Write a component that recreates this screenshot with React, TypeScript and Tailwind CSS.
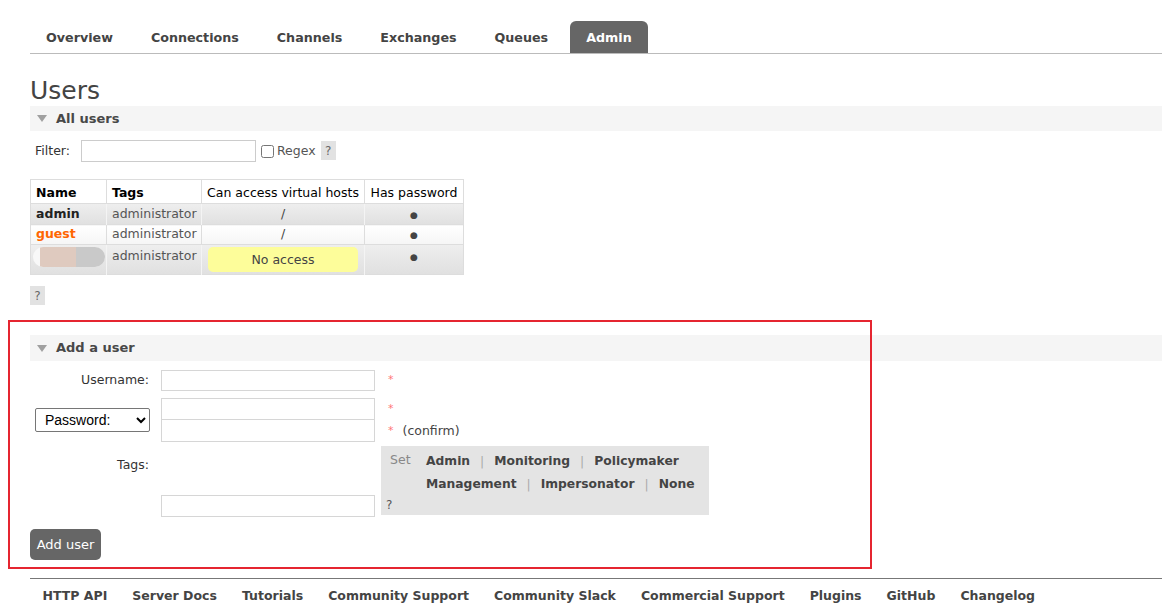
import React from "react";

const tabs = ["Overview", "Connections", "Channels", "Exchanges", "Queues", "Admin"];
const footerLinks = [
  "HTTP API",
  "Server Docs",
  "Tutorials",
  "Community Support",
  "Community Slack",
  "Commercial Support",
  "Plugins",
  "GitHub",
  "Changelog",
];

function SectionBar({ title }: { title: string }) {
  return (
    <div className="flex h-full items-center bg-[#f5f5f5] pl-[7px]">
      <svg width="10" height="7" viewBox="0 0 10 7">
        <polygon points="0,0 10,0 5,7" fill="#a0a0a0" />
      </svg>
      <span className="ml-[9px] text-[13px] font-bold text-[#484848]">{title}</span>
    </div>
  );
}

function Help() {
  return (
    <span className="inline-flex h-[19px] w-[15px] items-center justify-center bg-[#e2e2e2] text-[12px] text-[#666]">
      ?
    </span>
  );
}

function Dot() {
  return <span className="text-[9px] text-[#444]">●</span>;
}

function TagSep() {
  return <span className="mx-[10px] font-normal text-[#aaa]">|</span>;
}

export default function App() {
  return (
    <div className="relative min-h-[605px] bg-white font-['DejaVu_Sans',Verdana,sans-serif] text-[12.5px] text-[#484848]">
      {/* tabs */}
      <div className="ml-[30px] flex h-[54px] items-end border-b border-[#bbb] pt-[21px]">
        {tabs.map((t) =>
          t === "Admin" ? (
            <div key={t} className="mr-[6px] flex h-[32px] items-center rounded-t-[6px] bg-[#666] px-4 pt-[2px] text-[12.7px] font-bold text-white">
              {t}
            </div>
          ) : (
            <div key={t} className="mr-[6px] flex h-[32px] items-center px-4 pt-[2px] text-[12.7px] font-bold text-[#444]">
              {t}
            </div>
          )
        )}
      </div>

      <div className="pl-[30px]">
        <h1 className="mt-[22px] text-[25px] leading-[30px] font-normal text-[#444]">Users</h1>

        <div className="h-[25px]">
          <SectionBar title="All users" />
        </div>

        {/* filter */}
        <div className="mt-[9px] flex h-[22px] items-center pl-[5px]">
          <span className="text-[#333]">Filter:</span>
          <input className="ml-[11px] h-[22px] w-[175px] border border-[#ccc] bg-white" />
          <input type="checkbox" className="ml-[5px] h-[13px] w-[13px]" />
          <span className="ml-[3px] text-[#555]">Regex</span>
          <span className="ml-[5px]">
            <Help />
          </span>
        </div>

        {/* users table */}
        <table className="mt-[17px] w-[434px] table-fixed border-collapse border border-[#ddd] text-[12.5px]">
          <thead>
            <tr className="h-[24px] bg-white text-black">
              <th className="w-[76px] border border-[#ddd] px-[5px] pt-[3px] text-left font-bold">Name</th>
              <th className="w-[95px] border border-[#ddd] px-[5px] pt-[3px] text-left font-bold">Tags</th>
              <th className="w-[163px] border border-[#ddd] px-[2px] pt-[3px] text-center font-normal whitespace-nowrap">Can access virtual hosts</th>
              <th className="w-[99px] border border-[#ddd] px-[2px] pt-[3px] text-center font-normal whitespace-nowrap">Has password</th>
            </tr>
          </thead>
          <tbody>
            <tr className="h-[21px] bg-linear-to-b from-[#eeeeee] to-[#e0e0e0]">
              <td className="border-r border-[#f4f4f4] px-[5px] pt-[1px] font-bold text-[#222]">admin</td>
              <td className="border-r border-[#f4f4f4] px-[5px] pt-[1px] text-[#555]">administrator</td>
              <td className="border-r border-[#f4f4f4] px-[5px] pt-[1px] text-center text-[#444]">/</td>
              <td className="px-[5px] pt-[1px] text-center">
                <Dot />
              </td>
            </tr>
            <tr className="h-[20px] border-y border-[#ddd] bg-linear-to-b from-white to-[#f6f6f6]">
              <td className="border-r border-[#ddd] px-[5px] font-bold text-[#ff6600]">guest</td>
              <td className="border-r border-[#ddd] px-[5px] text-[#555]">administrator</td>
              <td className="border-r border-[#ddd] px-[5px] text-center text-[#444]">/</td>
              <td className="px-[5px] text-center">
                <Dot />
              </td>
            </tr>
            <tr className="h-[30px] bg-linear-to-b from-[#eeeeee] to-[#e0e0e0]">
              <td className="border-r border-[#f4f4f4] px-[2px] pt-[2px] align-top">
                <div className="flex h-[20px] w-[72px] overflow-hidden rounded-full bg-[#f8f8f8]">
                  <div className="w-[7px]" />
                  <div className="w-[36px] bg-[#dfcabf]" />
                  <div className="flex-1 bg-[#c9c9c9]" />
                </div>
              </td>
              <td className="border-r border-[#f4f4f4] px-[5px] pt-[2px] align-top text-[#555]">administrator</td>
              <td className="border-r border-[#f4f4f4] px-[6px] pt-[2px] align-top">
                <div className="flex h-[25px] items-center justify-center rounded-[5px] bg-[#fdfd9a] pt-[1px] text-[#444]">No access</div>
              </td>
              <td className="px-[5px] pt-[2px] align-top text-center">
                <Dot />
              </td>
            </tr>
          </tbody>
        </table>

        <div className="mt-[11px] flex">
          <Help />
        </div>

        <div className="mt-[30px] h-[26px]">
          <SectionBar title="Add a user" />
        </div>

        {/* add user form */}
        <div className="mt-[9px]">
          <div className="flex h-[21px] items-center">
            <label className="w-[119px] text-right text-[#333]">Username:</label>
            <input className="ml-[12px] h-[21px] w-[214px] border border-[#d6d6d6] bg-white" />
            <span className="ml-[13px] text-[11px] text-[#f77]">*</span>
          </div>

          <div className="mt-[7px] flex items-center">
            <div className="w-[131px] pl-[5px]">
              <select className="h-[24px] w-[115px] rounded-[2px] border border-[#767676] bg-white pl-[5px] font-['Liberation_Sans',Arial,sans-serif] text-[14px] text-black">
                <option>Password:</option>
              </select>
            </div>
            <div className="flex w-[214px] flex-col">
              <input type="password" className="h-[22px] border border-[#d6d6d6] bg-white" />
              <input type="password" className="h-[22px] border border-t-0 border-[#d6d6d6] bg-white" />
            </div>
            <div className="ml-[13px] flex flex-col">
              <div className="flex h-[22px] items-center text-[11px] text-[#f77]">*</div>
              <div className="flex h-[22px] items-center">
                <span className="text-[11px] text-[#f77]">*</span>
                <span className="ml-[9px] text-[#444]">(confirm)</span>
              </div>
            </div>
          </div>

          <div className="mt-[4px] flex items-start">
            <label className="w-[119px] pt-[10px] text-right text-[#333]">Tags:</label>
            <input className="mt-[49px] ml-[12px] h-[22px] w-[214px] border border-[#d6d6d6] bg-white" />
            <div className="ml-[6px] flex h-[69px] w-[328px] flex-col bg-[#e4e4e4]">
              <div className="flex pt-[4px] pl-[9px]">
                <span className="relative -top-[2px] w-[36px] leading-[23px] text-[#888]">Set</span>
                <div className="text-[12.3px] font-bold leading-[23px] text-[#444]">
                  <div>
                    Admin<TagSep />Monitoring<TagSep />Policymaker
                  </div>
                  <div>
                    Management<TagSep />Impersonator<TagSep />None
                  </div>
                </div>
              </div>
              <div className="pl-[5px] text-[12px] leading-[18px] text-[#555]">?</div>
            </div>
          </div>

          <button className="mt-[12px] h-[31px] w-[71px] rounded-[5px] bg-[#666] text-[13px] text-white">Add user</button>
        </div>

        {/* footer */}
        <div className="mt-[18px] flex border-t border-[#777] pt-[8px]">
          {footerLinks.map((l) => (
            <span key={l} className="px-[12.5px] text-[12.5px] font-bold text-[#444]">
              {l}
            </span>
          ))}
        </div>
      </div>

      {/* annotation box */}
      <div className="pointer-events-none absolute top-[320px] left-[8px] h-[249px] w-[864px] border-2 border-[#e52530]" />
    </div>
  );
}
